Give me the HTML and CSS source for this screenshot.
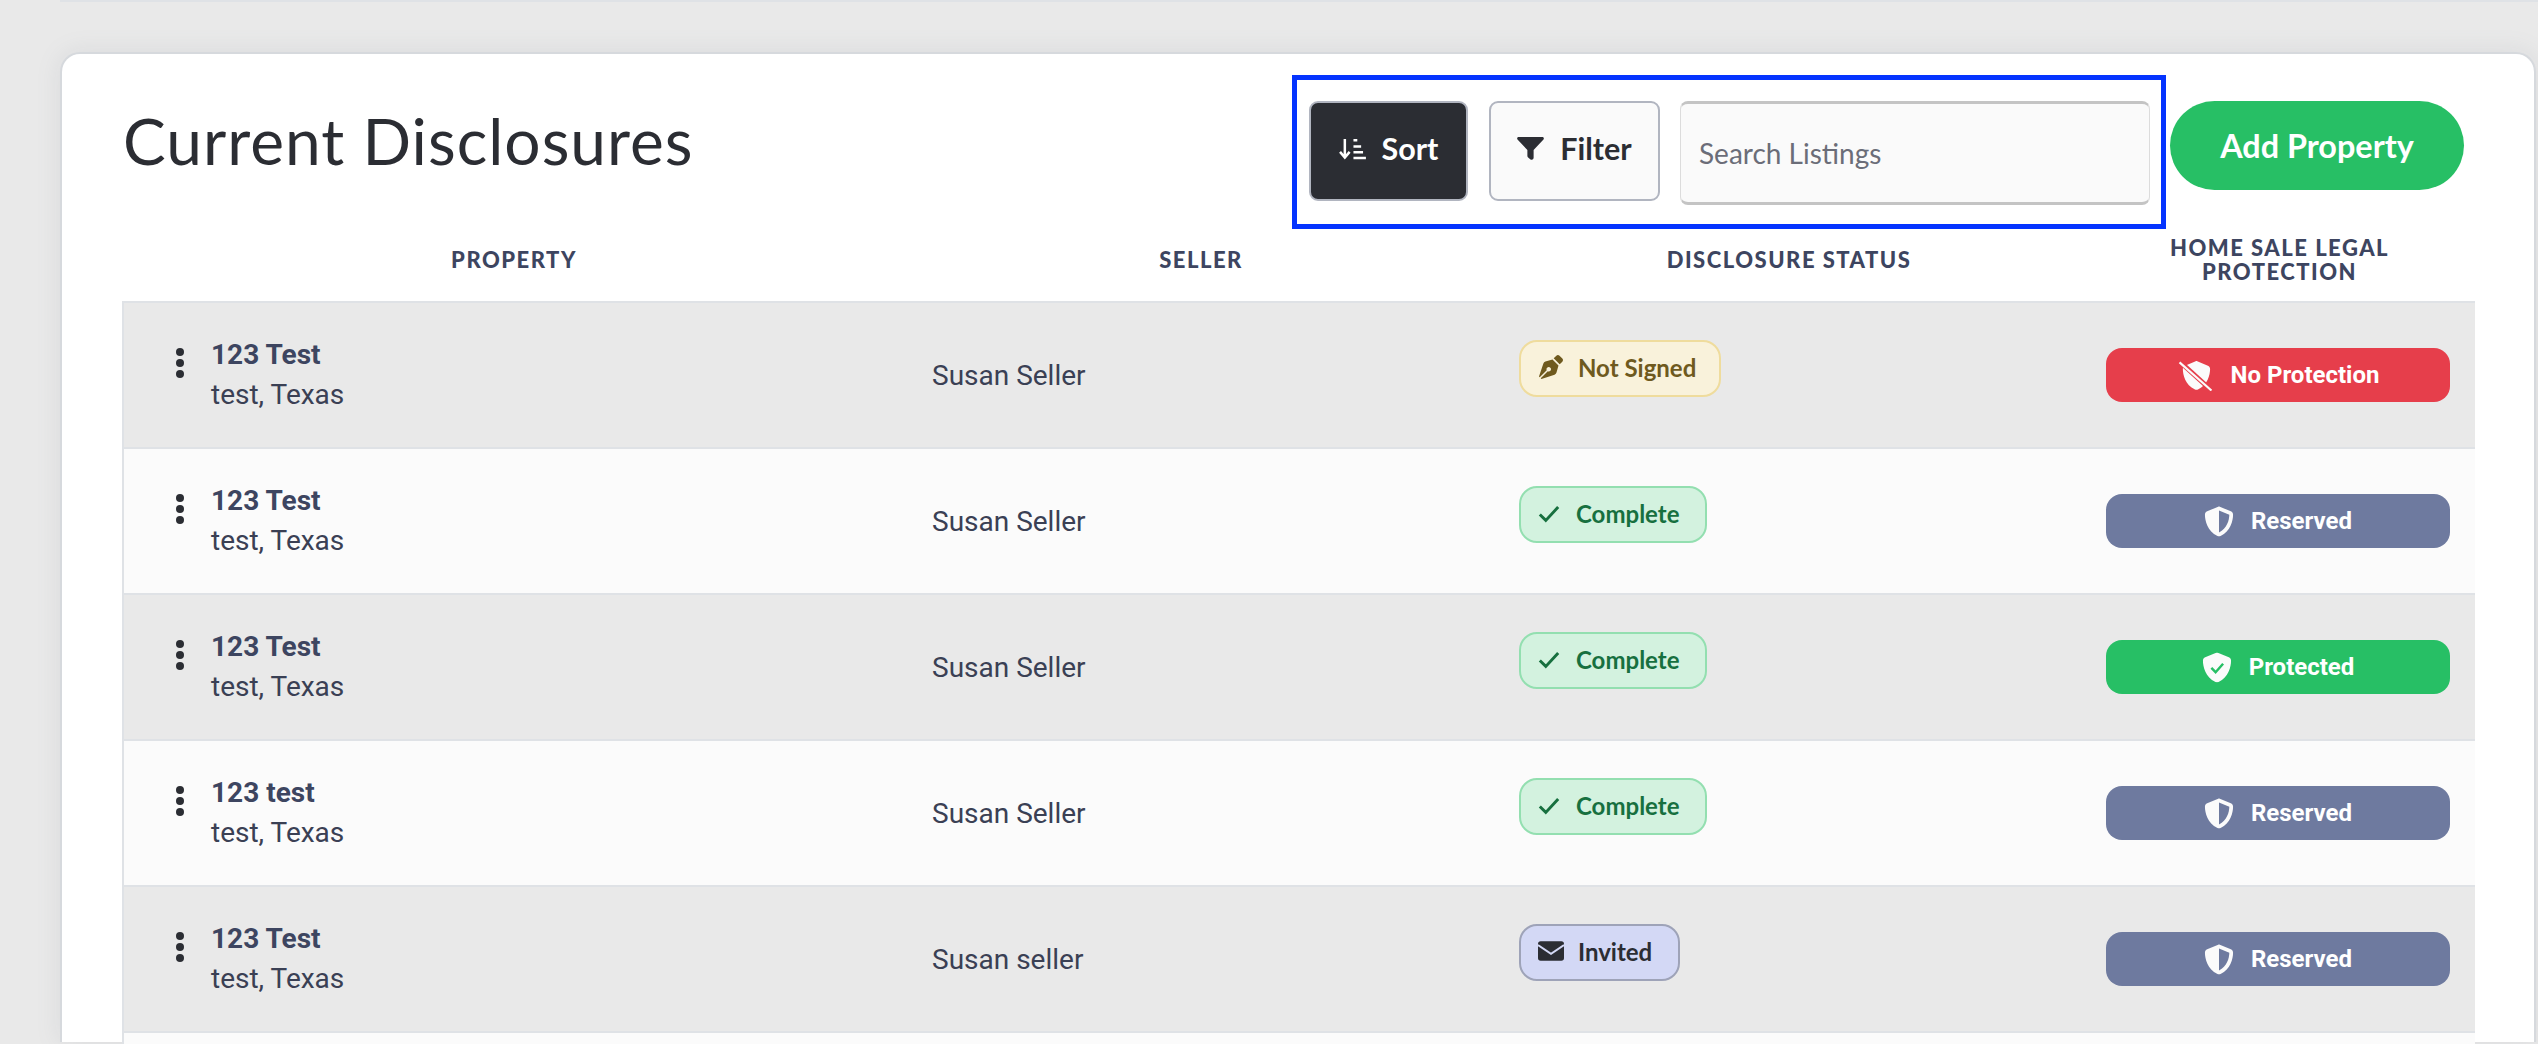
FILE: index.html
```html
<!DOCTYPE html>
<html lang="en">

<head>
  <meta charset="UTF-8">
  <title>Current Disclosures</title>
  <link rel="stylesheet" href="styles.css">
</head>

<body>
  <!-- icon sprite -->
  <svg class="sprite" xmlns="http://www.w3.org/2000/svg">
    <symbol id="i-shield" viewBox="0 0 512 512">
      <path d="M256 0c4.6 0 9.2 1 13.4 2.9L457.7 82.8c22 9.3 38.4 31 38.3 57.2c-.5 99.2-41.3 280.7-213.6 363.2c-16.7 8-36.1 8-52.8 0C57.3 420.7 16.5 239.2 16 140c-.1-26.2 16.3-47.9 38.3-57.2L242.7 2.9C246.8 1 251.4 0 256 0z" />
    </symbol>
    <symbol id="i-half" viewBox="0 0 512 512">
      <path d="M256 0c4.6 0 9.2 1 13.4 2.9L457.7 82.8c22 9.3 38.4 31 38.3 57.2c-.5 99.2-41.3 280.7-213.6 363.2c-16.7 8-36.1 8-52.8 0C57.3 420.7 16.5 239.2 16 140c-.1-26.2 16.3-47.9 38.3-57.2L242.7 2.9C246.8 1 251.4 0 256 0zm0 66.8V444.8C394 378 431.1 230.1 432 141.4L256 66.8z" />
    </symbol>
    <symbol id="i-nib" viewBox="0 0 512 512">
      <path d="M136.6 138.79a64.003 64.003 0 0 0-43.31 41.35L0 460l14.69 14.69L164.8 324.58c-2.99-6.26-4.8-13.18-4.8-20.58 0-26.51 21.49-48 48-48s48 21.49 48 48-21.49 48-48 48c-7.4 0-14.32-1.81-20.58-4.8L37.31 497.31 52 512l279.86-93.29a64.003 64.003 0 0 0 41.35-43.31L416 224 288 96l-151.4 42.79zm361.34-64.62l-60.11-60.11c-18.75-18.75-49.16-18.75-67.91 0l-56.55 56.55 128.02 128.02 56.55-56.55c18.75-18.75 18.75-49.15 0-67.91z" />
    </symbol>
    <symbol id="i-check" viewBox="0 0 24 20">
      <path d="M2 11l6.5 6.5L22 3" fill="none" stroke="currentColor" stroke-width="3.2" />
    </symbol>
  </svg>

  <div class="topbar"></div>

  <div class="card">
    <div class="card-head">
      <h1 class="title">Current Disclosures</h1>
      <div class="actions">
        <div class="controls">
          <button class="btn btn-dark">
            <svg class="btn-icon" viewBox="0 0 28 24" fill="none" stroke="currentColor" stroke-width="2.6">
              <path d="M6 2v19M1 15.5l5 6 5-6" />
              <path d="M15 3.5h4M15 10h8M15 16h10M15 22h13" />
            </svg>
            Sort
          </button>
          <button class="btn">
            <svg class="btn-icon" viewBox="0 0 26 22" fill="currentColor">
              <path d="M1.5 0h23c1.2 0 1.8 1.400 1 2.300L16 12.500V20c0 1.500-1.700 2.400-3 1.500l-2-1.500c-.6-.4-1-1.100-1-1.800v-5.700L.5 2.300C-.3 1.400.3 0 1.500 0z" />
            </svg>
            Filter
          </button>
          <input class="search" type="text" placeholder="Search Listings">
        </div>
        <button class="btn-add">Add Property</button>
      </div>
    </div>

    <div class="table">
      <div class="row-head">
        <div>PROPERTY</div>
        <div>SELLER</div>
        <div>DISCLOSURE STATUS</div>
        <div class="head-last">HOME SALE LEGAL PROTECTION</div>
      </div>

      <div class="row">
        <div class="cell-name">
          <span class="dots"><i></i><i></i><i></i></span>
          <div><b>123 Test</b><br>test, Texas</div>
        </div>
        <div class="cell-seller">Susan Seller</div>
        <div><span class="tag tag-yellow"><svg class="tag-icon"><use href="#i-nib" /></svg>Not Signed</span></div>
        <div>
          <span class="prot prot-red">
            <svg class="prot-icon slash" viewBox="0 0 36 32">
              <use href="#i-shield" x="4" y="1" width="30" height="30" />
              <path class="slash-gap" d="M1 1l33 30" />
              <path class="slash-line" d="M1.500 2.500l33 29" />
            </svg>
            No Protection
          </span>
        </div>
      </div>

      <div class="row">
        <div class="cell-name">
          <span class="dots"><i></i><i></i><i></i></span>
          <div><b>123 Test</b><br>test, Texas</div>
        </div>
        <div class="cell-seller">Susan Seller</div>
        <div><span class="tag tag-green"><svg class="tag-icon"><use href="#i-check" /></svg>Complete</span></div>
        <div><span class="prot prot-blue"><svg class="prot-icon"><use href="#i-half" /></svg>Reserved</span></div>
      </div>

      <div class="row">
        <div class="cell-name">
          <span class="dots"><i></i><i></i><i></i></span>
          <div><b>123 Test</b><br>test, Texas</div>
        </div>
        <div class="cell-seller">Susan Seller</div>
        <div><span class="tag tag-green"><svg class="tag-icon"><use href="#i-check" /></svg>Complete</span></div>
        <div>
          <span class="prot prot-green">
            <svg class="prot-icon" viewBox="0 0 32 32">
              <use href="#i-shield" width="32" height="32" />
              <path class="shield-check" d="M10 16.500l4.500 4.500 8-9" />
            </svg>
            Protected
          </span>
        </div>
      </div>

      <div class="row">
        <div class="cell-name">
          <span class="dots"><i></i><i></i><i></i></span>
          <div><b>123 test</b><br>test, Texas</div>
        </div>
        <div class="cell-seller">Susan Seller</div>
        <div><span class="tag tag-green"><svg class="tag-icon"><use href="#i-check" /></svg>Complete</span></div>
        <div><span class="prot prot-blue"><svg class="prot-icon"><use href="#i-half" /></svg>Reserved</span></div>
      </div>

      <div class="row">
        <div class="cell-name">
          <span class="dots"><i></i><i></i><i></i></span>
          <div><b>123 Test</b><br>test, Texas</div>
        </div>
        <div class="cell-seller">Susan seller</div>
        <div>
          <span class="tag tag-blue">
            <svg class="tag-icon" viewBox="0 0 24 20">
              <rect x="0" y="1" width="24" height="18" rx="2.500" fill="currentColor" />
              <path d="M0 4.500l12 8 12-8" fill="none" stroke="#d3d8f5" stroke-width="1.800" />
            </svg>
            Invited
          </span>
        </div>
        <div><span class="prot prot-blue"><svg class="prot-icon"><use href="#i-half" /></svg>Reserved</span></div>
      </div>

      <div class="row"></div>
    </div>
  </div>
</body>

</html>
```

FILE: styles.css
```css
* {
  margin: 0;
  padding: 0;
  box-sizing: border-box;
}

html,
body {
  height: 1044px;
  overflow: hidden;
}

body {
  background-color: #e9e9e9;
  font-family: "Roboto", sans-serif;
  color: #3a4054;
}

.sprite {
  display: none;
}

.topbar {
  height: 2px;
  margin-left: 60px;
  background-color: #dfe2e6;
}

.card {
  margin: 50px 2px 0 60px;
  height: 990px;
  padding: 21px 59px 0 60px;
  background-color: #fff;
  border: 2px solid #d6d9dd;
  border-bottom: none;
  border-radius: 20px 20px 0 0;
  box-shadow: 0 0 24px rgba(120, 125, 140, 0.14);
}

/* 头部 */
.card-head {
  display: flex;
  justify-content: space-between;
  align-items: flex-start;
}

.title {
  padding-top: 23px;
  padding-left: 1px;
  font-family: "Lato", sans-serif;
  font-size: 64px;
  font-weight: 400;
  line-height: 86px;
  letter-spacing: 1px;
  color: #2b2d33;
}

.actions {
  display: flex;
  align-items: flex-start;
  gap: 4px;
  margin-right: 11px;
}

.controls {
  display: flex;
  align-items: flex-start;
  gap: 21px;
  width: 874px;
  height: 154px;
  padding: 21px 11px 0 12px;
  border: 5px solid #0433ff;
}

.btn {
  display: flex;
  align-items: center;
  justify-content: center;
  gap: 16px;
  width: 159px;
  height: 100px;
  padding-bottom: 6px;
  background-color: #fafafa;
  border: 2.500px solid #b1b5c0;
  border-radius: 9px;
  font-family: "Lato", sans-serif;
  font-size: 30.500px;
  font-weight: 700;
  color: #2b2d33;
}

.btn + .btn {
  width: 171px;
}

.btn-dark {
  background-color: #2b2d33;
  color: #fff;
}

.btn-icon {
  width: 27px;
  height: 23px;
}

.search {
  width: 470px;
  height: 104px;
  margin-left: -1px;
  padding: 0 18px;
  background-color: #fafafa;
  border: 1px solid #dcdcdc;
  border-top: 3px solid #c4c4c4;
  border-bottom: 3px solid #c4c4c4;
  border-radius: 8px;
  font-family: "Lato", sans-serif;
  font-size: 28px;
}

.search::placeholder {
  color: #6b6d78;
  opacity: 1;
}

.btn-add {
  width: 294px;
  height: 89px;
  margin-top: 26px;
  background-color: #27bf65;
  border: none;
  border-radius: 45px;
  font-family: "Lato", sans-serif;
  font-size: 32.400px;
  font-weight: 700;
  color: #fff;
}

/* 表格 */
.row-head,
.row {
  display: grid;
  grid-template-columns: 784px 590px 586px 395px;
  align-items: center;
}

.row-head {
  height: 72px;
  padding-bottom: 10px;
  font-family: "Lato", sans-serif;
  font-size: 22px;
  font-weight: 900;
  line-height: 24px;
  letter-spacing: 1.500px;
  text-align: center;
  color: #3d4560;
}

.head-last {
  padding: 0 70px;
}

.row {
  height: 146.100px;
  border-top: 2.500px solid #dfe2e6;
  border-left: 2.500px solid #dfe2e6;
  font-size: 28px;
  background-color: #fbfbfb;
}

.row:nth-child(even) {
  background-color: #e9e9e9;
}

.cell-name {
  display: flex;
  gap: 27px;
  padding-left: 52px;
  line-height: 40px;
}

.cell-name b {
  font-weight: 700;
  color: #3d4560;
}

.dots {
  display: flex;
  flex-direction: column;
  gap: 3px;
  padding-top: 13px;
}

.dots i {
  width: 8px;
  height: 8px;
  border-radius: 50%;
  background-color: #2b2d33;
}

.cell-seller {
  padding-left: 24px;
}

/* 状态标签 */
.tag {
  display: inline-flex;
  align-items: center;
  gap: 14px;
  height: 57px;
  margin-left: 21px;
  margin-bottom: 14px;
  padding: 0 26px 2px 17px;
  border: 2.500px solid;
  border-radius: 18px;
  font-family: "Lato", sans-serif;
  font-size: 24px;
  font-weight: 700;
}

.tag-icon {
  width: 26px;
  height: 24px;
}

.tag-yellow {
  padding-right: 23px;
  background-color: #f9f2db;
  border-color: #efdc9d;
  color: #6f5a1e;
  fill: #6f5a1e;
}

.tag-green {
  background-color: #d3f2df;
  border-color: #93dfb0;
  color: #17703f;
}

.tag-green .tag-icon {
  width: 22px;
  height: 19px;
  margin-right: 2px;
}

.tag-blue {
  background-color: #d3d8f5;
  border-color: #9ea3b8;
  color: #2b2d33;
}

/* 保护状态 */
.prot {
  display: flex;
  align-items: center;
  justify-content: center;
  gap: 17px;
  width: 344px;
  height: 54px;
  margin-left: 22px;
  border-radius: 16px;
  font-size: 24px;
  font-weight: 700;
  color: #fff;
  fill: #fbfbfb;
}

.prot-icon {
  width: 30px;
  height: 31px;
}

.prot-icon.slash {
  width: 37px;
}

.prot-red {
  background-color: #e63e4b;
}

.prot-blue {
  background-color: #6e7a9f;
}

.prot-green {
  background-color: #27bf65;
}

.slash-gap {
  fill: none;
  stroke: #e63e4b;
  stroke-width: 5;
}

.slash-line {
  fill: none;
  stroke: #fbfbfb;
  stroke-width: 2.200;
}

.shield-check {
  fill: none;
  stroke: #27bf65;
  stroke-width: 2.600;
}
```
